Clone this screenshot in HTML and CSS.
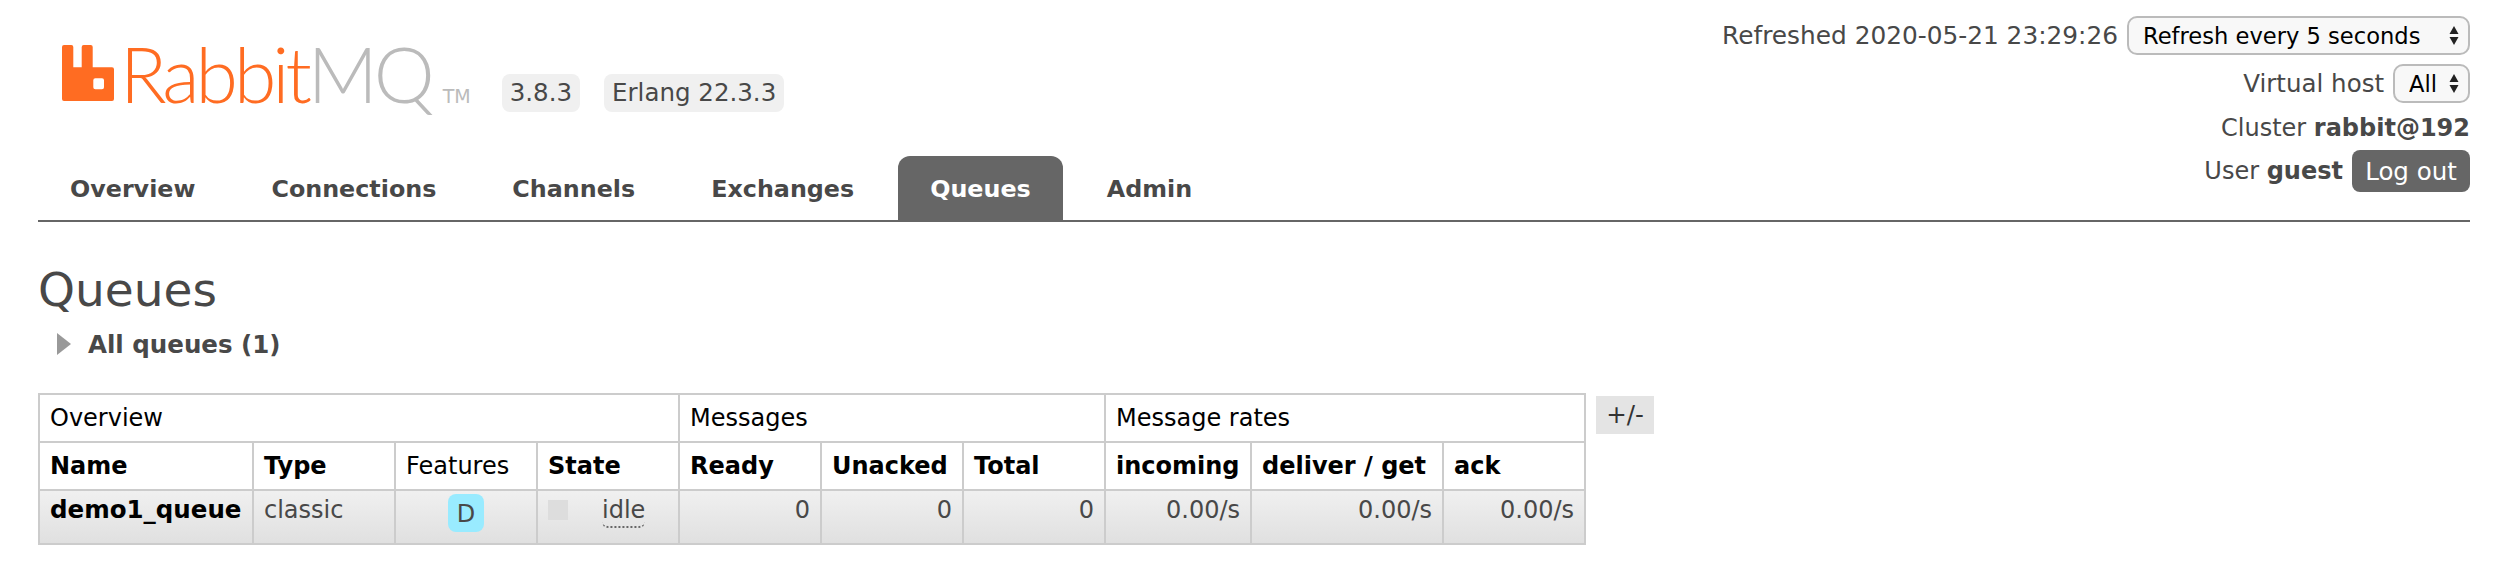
FILE: index.html
```html
<!DOCTYPE html>
<html lang="en">
<head>
    <meta charset="UTF-8">
    <meta name="viewport" content="width=device-width, initial-scale=1.0">
    <title>RabbitMQ Management</title>
    <link rel="stylesheet" href="styles.css">
</head>
<body>
<div class="header">
    <div class="header-left">
        <div class="brand">
            <svg class="logo-icon" viewBox="0 0 52 56" width="52" height="56">
                <path fill="#ff6c22" fill-rule="evenodd" d="M2 0h7.300a2 2 0 0 1 2 2v20.300h8.400v-20.300a2 2 0 0 1 2-2h7a2 2 0 0 1 2 2v20.300h19.300a2 2 0 0 1 2 2v29.700a2 2 0 0 1-2 2h-48a2 2 0 0 1-2-2v-52a2 2 0 0 1 2-2zM33.300 33.300a2 2 0 0 0-2 2v7a2 2 0 0 0 2 2h6.700a2 2 0 0 0 2-2v-7a2 2 0 0 0-2-2z"/>
            </svg>
            <span class="logo-text"><span class="logo-rabbit">Rabbit</span><span class="logo-mq">MQ</span></span>
            <span class="logo-tm">TM</span>
            <span class="version">3.8.3</span>
            <span class="version">Erlang 22.3.3</span>
        </div>
        <ul class="tabs">
            <li><a href="#">Overview</a></li>
            <li><a href="#">Connections</a></li>
            <li><a href="#">Channels</a></li>
            <li><a href="#">Exchanges</a></li>
            <li><a href="#" class="active">Queues</a></li>
            <li><a href="#">Admin</a></li>
        </ul>
    </div>
    <div class="status">
        <div class="status-row">
            <span class="refreshed">Refreshed 2020-05-21 23:29:26</span>
            <div class="select-box refresh-box">
                <select class="select-input">
                    <option>Refresh every 5 seconds</option>
                </select>
                <svg class="select-arrows" viewBox="0 0 10 19" width="10" height="19"><path d="M5 0l4.500 8h-9zM5 19l-4.500-8h9z"/></svg>
            </div>
        </div>
        <div class="status-row">
            <span>Virtual host</span>
            <div class="select-box vhost-box">
                <select class="select-input">
                    <option>All</option>
                </select>
                <svg class="select-arrows" viewBox="0 0 10 19" width="10" height="19"><path d="M5 0l4.500 8h-9zM5 19l-4.500-8h9z"/></svg>
            </div>
        </div>
        <div class="status-row cluster-row">
            <span>Cluster <b>rabbit@192</b></span>
        </div>
        <div class="status-row user-row">
            <span>User <b>guest</b></span>
            <button class="logout">Log out</button>
        </div>
    </div>
</div>

<h1>Queues</h1>
<div class="section-title">
    <span class="arrow"></span>
    <span>All queues (1)</span>
</div>

<div class="table-wrap">
    <table class="queues">
        <colgroup>
            <col class="col-name"><col class="col-type"><col class="col-features"><col class="col-state">
            <col class="col-ready"><col class="col-unacked"><col class="col-total">
            <col class="col-incoming"><col class="col-deliver"><col class="col-ack">
        </colgroup>
        <tr class="group-row">
            <th colspan="4">Overview</th>
            <th colspan="3">Messages</th>
            <th colspan="3">Message rates</th>
        </tr>
        <tr class="head-row">
            <th>Name</th>
            <th>Type</th>
            <th class="plain">Features</th>
            <th>State</th>
            <th>Ready</th>
            <th>Unacked</th>
            <th>Total</th>
            <th>incoming</th>
            <th>deliver / get</th>
            <th>ack</th>
        </tr>
        <tr class="data-row">
            <td class="queue-name">demo1_queue</td>
            <td>classic</td>
            <td class="center"><span class="feature">D</span></td>
            <td><div class="state"><span class="state-box"></span><span class="state-label">idle</span></div></td>
            <td class="num">0</td>
            <td class="num">0</td>
            <td class="num">0</td>
            <td class="num">0.00/s</td>
            <td class="num">0.00/s</td>
            <td class="num">0.00/s</td>
        </tr>
    </table>
    <span class="toggle-cols">+/-</span>
</div>
</body>
</html>
```

FILE: styles.css
```css
body {
    margin: 0;
    padding: 0 34px 0 38px;
    background: #fff;
    font-family: "DejaVu Sans", Verdana, sans-serif;
    font-size: 24.500px;
    color: #484848;
    overflow: hidden;
}

.header {
    display: flex;
    justify-content: space-between;
    border-bottom: 2px solid #666;
    height: 220px;
}

.brand {
    display: flex;
    align-items: flex-start;
    height: 156px;
    padding: 45px 0 0 24px;
    box-sizing: border-box;
}

.logo-icon {
    flex: none;
}

.logo-text {
    font-family: Lato, "Liberation Sans", sans-serif;
    font-weight: 300;
    font-size: 77px;
    line-height: 56px;
    margin-left: 6px;
    letter-spacing: -4px;
}

.logo-rabbit {
    color: #ff6c22;
}

.logo-mq {
    color: #bbb;
}

.logo-tm {
    font-size: 19px;
    color: #bbb;
    margin: 40px 31px 0 12px;
}

.version {
    background: #f0f0f0;
    border-radius: 8px;
    padding: 0 8px;
    height: 38px;
    line-height: 38px;
    margin: 29px 24px 0 0;
}

.tabs {
    display: flex;
    gap: 12px;
    list-style: none;
    margin: 0;
    padding: 0;
}

.tabs a {
    display: block;
    height: 64px;
    line-height: 66px;
    padding: 0 32px;
    font-size: 23.800px;
    font-weight: bold;
    color: #484848;
    text-decoration: none;
    border-radius: 12px 12px 0 0;
}

.tabs a.active {
    background: #666;
    color: #fff;
}

.status {
    display: flex;
    flex-direction: column;
    align-items: flex-end;
    padding-top: 16px;
}

.status-row {
    display: flex;
    align-items: center;
    gap: 9px;
    margin-bottom: 9px;
}

.refreshed {
    font-size: 24.800px;
}

.cluster-row {
    height: 32px;
    margin-bottom: 6px;
    font-size: 24px;
}

.user-row {
    font-size: 24px;
}

.select-box {
    position: relative;
    height: 39px;
}

.select-input {
    appearance: none;
    height: 100%;
    width: 100%;
    box-sizing: border-box;
    padding: 0 0 0 14px;
    background: #f8f8f8;
    border: 2px solid #bbb;
    border-radius: 10px;
    font-family: "DejaVu Sans", Verdana, sans-serif;
    font-size: 22.600px;
    color: #000;
}

.refresh-box {
    width: 343px;
}

.vhost-box {
    width: 77px;
}

.select-arrows {
    position: absolute;
    right: 11px;
    top: 10px;
    fill: #222;
}

.logout {
    width: 118px;
    height: 42px;
    padding: 0;
    border: none;
    border-radius: 8px;
    background: #666;
    color: #fff;
    font-family: "DejaVu Sans", Verdana, sans-serif;
    font-size: 24.500px;
}

h1 {
    margin: 40px 0 0 0;
    font-size: 47px;
    font-weight: normal;
    line-height: 56px;
    color: #484848;
}

.section-title {
    display: flex;
    align-items: center;
    gap: 17px;
    margin: 10px 0 0 19px;
    height: 32px;
    font-weight: bold;
}

.arrow {
    width: 0;
    height: 0;
    border-style: solid;
    border-width: 11px 0 11px 14px;
    border-color: transparent transparent transparent #999;
}

.table-wrap {
    display: flex;
    align-items: flex-start;
    gap: 10px;
    margin-top: 33px;
}

.queues {
    border-collapse: collapse;
    table-layout: fixed;
    width: 1548px;
    flex: none;
    font-size: 24px;
}

.col-name { width: 214px; }
.col-type { width: 142px; }
.col-features { width: 142px; }
.col-state { width: 142px; }
.col-ready { width: 142px; }
.col-unacked { width: 142px; }
.col-total { width: 142px; }
.col-incoming { width: 146px; }
.col-deliver { width: 192px; }
.col-ack { width: 142px; }

.queues th, .queues td {
    border: 2px solid #ccc;
    padding: 0 10px;
    text-align: left;
    vertical-align: top;
    line-height: 28px;
    color: #000;
    white-space: nowrap;
}

.group-row th {
    font-weight: normal;
    height: 48px;
    padding-top: 9px;
    box-sizing: border-box;
}

.head-row th {
    height: 48px;
    padding-top: 9px;
    box-sizing: border-box;
}

.head-row th.plain {
    font-weight: normal;
}

.data-row td {
    background: linear-gradient(#f0f0f0, #e0e0e0);
    color: #484848;
    height: 54px;
    padding-top: 5px;
    box-sizing: border-box;
}

.data-row td.queue-name {
    color: #000;
    font-size: 24.500px;
    font-weight: bold;
}

.data-row td.num {
    text-align: right;
}

.data-row td.center {
    text-align: center;
}

.feature {
    display: inline-block;
    vertical-align: top;
    width: 36px;
    height: 38px;
    line-height: 40px;
    margin-top: -2px;
    background: #99ebff;
    border-radius: 8px;
}

.state {
    display: flex;
    align-items: flex-start;
}

.state-box {
    width: 20px;
    height: 20px;
    margin-top: 4px;
    background: #ddd;
}

.state-label {
    margin-left: 34px;
    border-bottom: 2px dotted #666;
    border-radius: 0 0 6px 6px;
    height: 30px;
}

.toggle-cols {
    margin-top: 3px;
    width: 58px;
    height: 38px;
    line-height: 38px;
    text-align: center;
    background: #e4e4e4;
    color: #333;
}
```
